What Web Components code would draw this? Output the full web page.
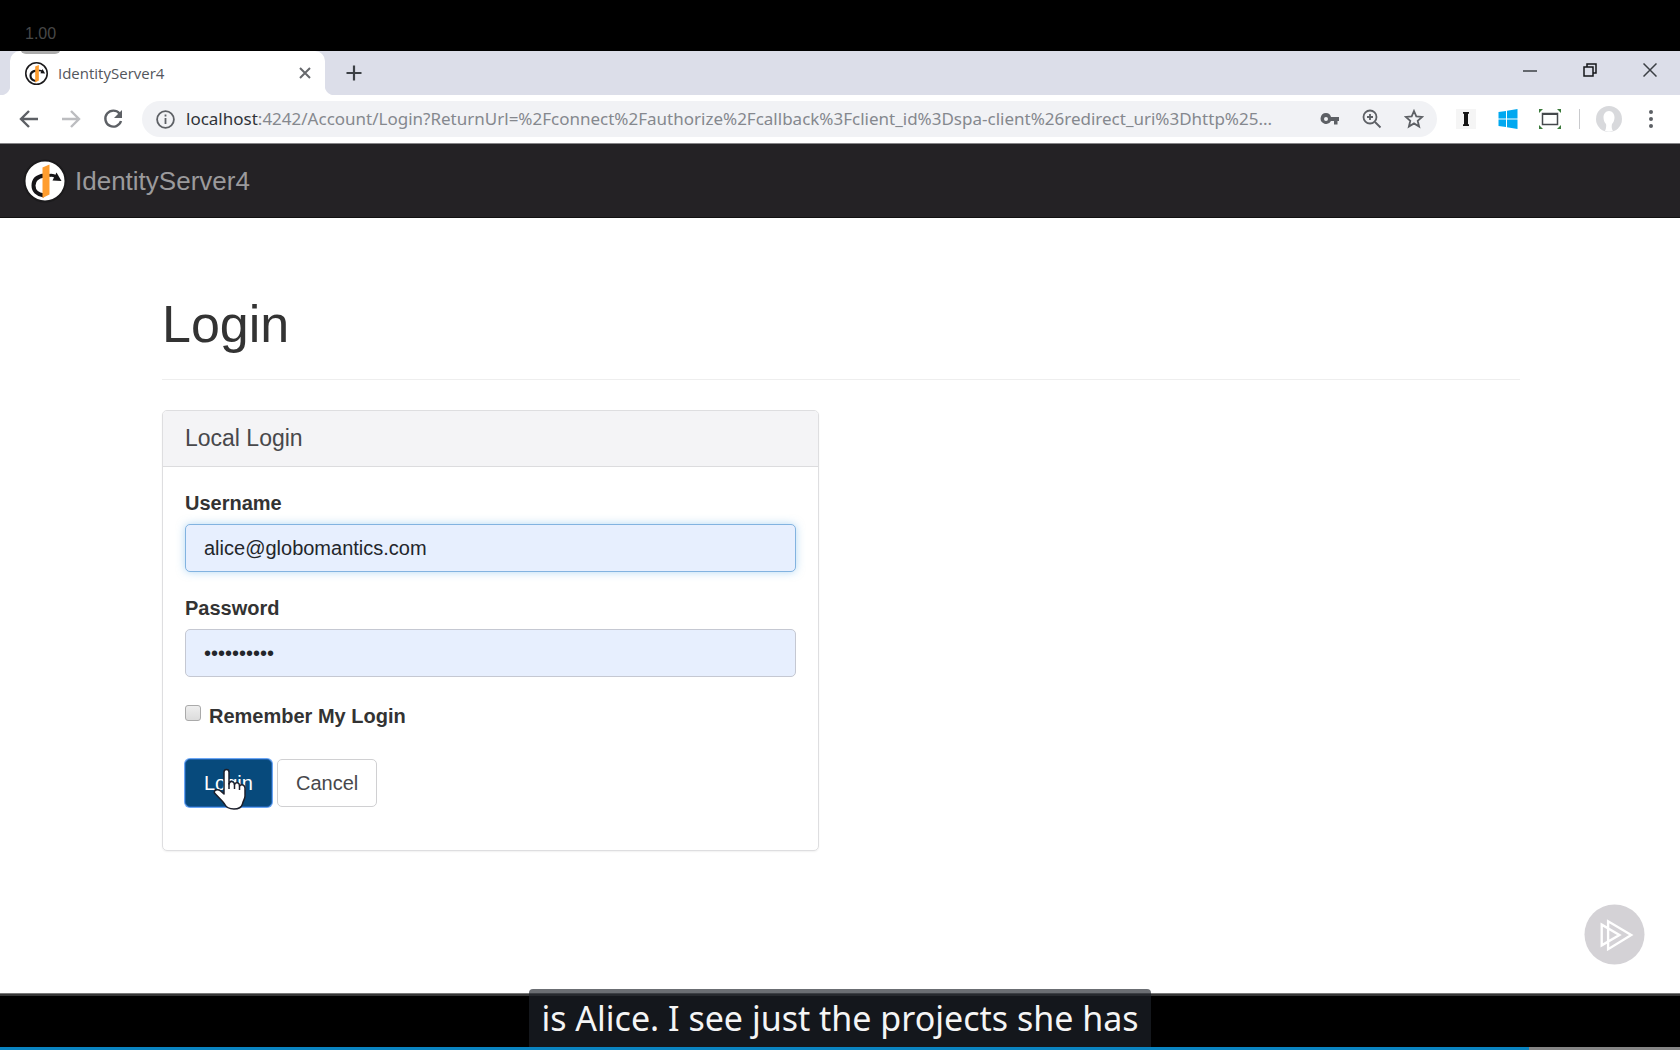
<!DOCTYPE html>
<html lang="en">
<head>
<meta charset="utf-8">
<title>IdentityServer4</title>
<style>
html, body { margin: 0; height: 100%; background: #000; }
body { font-family: "Liberation Sans", Arial, sans-serif; color: #333; }
</style>
</head>
<body>
<video-player rate="1.00">
  <browser-tabs>IdentityServer4</browser-tabs>
  <browser-toolbar></browser-toolbar>
  <site-nav>IdentityServer4</site-nav>
  <login-page></login-page>
  <span slot="caption">is Alice. I see just the projects she has</span>
</video-player>
<script>
function define(name, html) {
  const template = document.createElement('template');
  template.innerHTML = html;
  customElements.define(name, class extends HTMLElement {
    constructor() {
      super();
      this.attachShadow({ mode: 'open' }).append(template.content.cloneNode(true));
    }
    connectedCallback() {
      this.shadowRoot.querySelectorAll('[data-from]').forEach(el => {
        el.textContent = this.getAttribute(el.dataset.from) || '';
      });
    }
  });
}

define('video-player', `
<style>
:host { display: flex; flex-direction: column; min-height: 100vh; background: #000; position: relative; }
.top { height: 51px; flex: none; }
.rate { position: absolute; top: 12px; left: 20px; height: 42px; box-sizing: border-box; padding: 12px 5px; font-size: 16px; line-height: 20px; color: #484848; background: rgba(0,0,0,.33); border-radius: 6px; }
.screen { flex: 1; display: flex; flex-direction: column; background: #fff; border-bottom: 2px solid #363636; box-shadow: inset 0 -1px #777; position: relative; }
.bottom { height: 51px; flex: none; }
.progress { height: 3px; flex: none; display: flex; background: #858585; }
.played { width: 91%; background: #0a84c1; }
.overlay { position: absolute; left: 0; right: 0; bottom: 3px; display: flex; justify-content: center; }
.caption { background: rgba(30,35,42,.66); color: #f5f5f5; font: 34px/40px "Noto Sans", sans-serif; padding: 9px 12px; border-radius: 4px 4px 0 0; }
.mark { position: absolute; right: 35px; bottom: 29px; width: 61px; height: 61px; }
</style>
<div class="top"></div>
<div class="screen"><slot></slot>
<svg class="mark" viewBox="0 0 62 62" fill="none" stroke="#fff" stroke-width="2.4"><circle cx="31" cy="31" r="30.5" fill="#d4d2d6" stroke="none"/><path d="M24.500 17.500V46L48 31.500Z M18 21V42L36 31.500Z"/></svg>
</div>
<div class="rate" data-from="rate"></div>
<div class="bottom"></div>
<div class="progress"><div class="played"></div></div>
<div class="overlay"><div class="caption"><slot name="caption"></slot></div></div>
`);

define('identity-logo', `
<style>:host { display: block; flex: none; } svg { display: block; width: 100%; height: 100%; } .ring { stroke-width: var(--ring, 2); }</style>
<svg viewBox="0 0 44 44"><circle class="ring" cx="22" cy="22" r="20.500" fill="#fff" stroke="#1b1a1c"/><path d="M21 16.500C14 17.500 10.500 21 10.500 26.500C10.500 31.500 14 35.500 21 36.500" fill="none" stroke="#161518" stroke-width="4"/><path d="M26 16.500Q30 15.500 33 18" fill="none" stroke="#161518" stroke-width="3"/><path d="M33.500 13.500L38.500 22L29.500 21.500Z" fill="#161518"/><path d="M19.500 8.500L26.500 5.500V35.500L19.500 39Z" fill="#ff9d2e"/></svg>
`);

define('browser-tabs', `
<style>
:host { display: flex; height: 44px; background: #dcdee9; justify-content: space-between; font: 15px/24px "Open Sans", "Noto Sans", sans-serif; color: #53565c; }
.tab { display: flex; align-items: center; width: 315px; margin-left: 10px; box-sizing: border-box; padding: 0 13px 0 15px; background: #fff; border-radius: 10px 10px 0 0; position: relative; }
.tab::before, .tab::after { content: ""; position: absolute; bottom: 0; width: 10px; height: 10px; }
.tab::before { right: 100%; background: radial-gradient(circle at 0 0, #dcdee9 10px, #fff 11px); }
.tab::after { left: 100%; background: radial-gradient(circle at 100% 0, #dcdee9 10px, #fff 11px); }
identity-logo { width: 23px; height: 23px; margin-right: 10px; --ring: 3; }
.title { flex: 1; }
.left, .windows { display: flex; }
button { border: 0; background: none; padding: 0; display: grid; place-items: center; }
svg { display: block; fill: none; stroke: #3c4045; }
.tab svg { stroke: #66686c; }
.new { width: 58px; }
.windows { align-items: flex-start; }
.windows button { width: 60px; height: 37px; }
.windows .restore { stroke: #15171a; }
</style>
<div class="left">
<div class="tab"><identity-logo></identity-logo><span class="title"><slot></slot></span><button aria-label="Close tab"><svg width="14" height="14" stroke-width="2"><path d="M2 2L12 12M12 2L2 12"/></svg></button></div>
<button class="new" aria-label="New tab"><svg width="16" height="16" stroke-width="2.200"><path d="M8 .5V15.500M.5 8H15.500"/></svg></button>
</div>
<div class="windows">
<button aria-label="Minimize"><svg width="14" height="14" stroke-width="1.500"><path d="M0 8H14"/></svg></button>
<button aria-label="Restore"><svg class="restore" width="14" height="14" stroke-width="1.500"><path d="M1 4H10V13H1ZM4 4V1H13V10H10"/></svg></button>
<button aria-label="Close"><svg width="14" height="14" stroke-width="1.500"><path d="M.5 .5L13.500 13.500M13.500 .5L.5 13.500"/></svg></button>
</div>
`);

define('browser-toolbar', `
<style>
:host { display: flex; align-items: center; height: 48px; padding: 0 8px; border-bottom: 1px solid #858487; background: #fff; }
button { border: 0; background: none; padding: 0; display: grid; place-items: center; width: 42px; height: 36px; flex: none; }
svg { display: block; fill: none; stroke: #5d6065; stroke-width: 2.400; }
.bar { flex: 1; min-width: 0; display: flex; align-items: center; height: 36px; margin: 0 8px; padding-right: 2px; background: #f1f2f5; border-radius: 18px; font: 17px/24px "Noto Sans", sans-serif; }
.bar > svg { margin: 0 11px 0 14px; flex: none; }
.host { color: #303338; }
input { flex: 1; min-width: 0; border: 0; padding: 0; background: none; font: inherit; color: #85888e; outline: 0; }
.sep { width: 1px; height: 20px; background: #c9cacd; margin: 0 8px; }
</style>
<button aria-label="Back"><svg width="20" height="20"><path d="M19 10H2M10 2L2 10L10 18"/></svg></button>
<button aria-label="Forward"><svg width="20" height="20" style="stroke:#bcbdc0"><path d="M1 10H18M10 2L18 10L10 18"/></svg></button>
<button aria-label="Reload"><svg width="20" height="20"><path d="M16.500 4.500A8 8 0 1 0 18 12"/><path d="M19 1V9H11Z" fill="#5d6065" stroke="none"/></svg></button>
<div class="bar">
<svg width="19" height="19" style="stroke-width:1.800"><circle cx="9.500" cy="9.500" r="8.400"/><path d="M9.500 8V14M9.500 4.500V6.500"/></svg>
<label class="host" for="url">localhost</label><input id="url" aria-label="Address" value=":4242/Account/Login?ReturnUrl=%2Fconnect%2Fauthorize%2Fcallback%3Fclient_id%3Dspa-client%26redirect_uri%3Dhttp%25...">
<button aria-label="Saved password"><svg width="20" height="14"><path fill="#5d6065" stroke="none" fill-rule="evenodd" d="M6 1A5.500 5.500 0 0 1 11 5H19V9H17.500V12.500H14V9H11A5.500 5.500 0 1 1 6 1ZM6 5A2 2 0 1 0 6 9A2 2 0 0 0 6 5Z"/></svg></button>
<button aria-label="Zoom"><svg width="20" height="20" style="stroke-width:1.800"><circle cx="8" cy="8" r="6.500"/><path d="M13 13L18.500 18.500M8 5V11M5 8H11"/></svg></button>
<button aria-label="Bookmark"><svg width="20" height="20" viewBox="0 0 20 20" style="stroke-width:1.800"><path d="M10 2L12.300 7.400L18.200 7.900L13.700 11.800L15.100 17.500L10 14.400L4.900 17.500L6.300 11.800L1.800 7.900L7.700 7.400Z"/></svg></button>
</div>
<button aria-label="Instapaper"><svg width="20" height="20" style="stroke:none"><rect width="20" height="20" fill="#f5f5f5"/><path fill="#151515" d="M7 3H13V4.500L12 5V15L13 15.500V17H7V15.500L8 15V5L7 4.500Z"/></svg></button>
<button aria-label="Windows"><svg width="20" height="20" style="stroke:none"><path fill="#00a8f0" d="M.5 3L8 2V9.500H.5ZM9 1.800L19.500 0V9.500H9ZM.5 10.500H8V18L.5 17ZM9 10.500H19.500V20L9 18.200Z"/></svg></button>
<button aria-label="Resize"><svg width="22" height="20"><path stroke="#45484c" style="stroke-width:1.500" d="M3.500 4.500H18.500V15.500H3.500Z"/><path stroke="#45484c" style="stroke-width:2" d="M3.500 5H18.500"/><path fill="#3b7a3b" stroke="none" d="M0 0H4L0 4ZM22 0V4L18 0ZM0 20V16L4 20ZM22 20H18L22 16Z"/></svg></button>
<span class="sep"></span>
<button aria-label="Profile"><svg width="26" height="26" style="stroke:none"><circle cx="13" cy="13" r="13" fill="#d8d9dc"/><path fill="#fff" d="M13 5C9.500 5 7.500 8 7.500 11.500C7.500 14 8.500 16.500 10 18C10.500 20 10 23 9 25Q13 26.500 17 25C15.500 23 15.500 20 16 18C17.500 16.500 18.500 14 18.500 11.500C18.500 8 16.500 5 13 5Z"/></svg></button>
<button aria-label="Menu"><svg width="6" height="20" style="stroke:none;fill:#5d6065"><circle cx="3" cy="3" r="2"/><circle cx="3" cy="10" r="2"/><circle cx="3" cy="17" r="2"/></svg></button>
`);

define('site-nav', `
<style>
:host { display: block; background: #242225; border-bottom: 1px solid #111; }
a { display: flex; align-items: center; gap: 8px; height: 73px; padding: 0 23px; color: #9b9a9c; text-decoration: none; font-size: 26px; line-height: 28px; width: max-content; }
identity-logo { width: 44px; height: 44px; }
</style>
<a href="#"><identity-logo></identity-logo><span><slot></slot></span></a>
`);

define('form-field', `
<style>:host { display: block; margin-bottom: 22px; } ::slotted(label) { display: block; font-weight: 700; line-height: 28px; margin-bottom: 7px; }</style>
<slot name="label"></slot><slot></slot>
`);

define('login-panel', `
<style>
:host { display: block; box-sizing: border-box; border: 1px solid #dedee0; border-radius: 5px; box-shadow: 0 1px 2px rgba(0,0,0,.06); font-size: 20px; line-height: 28px; }
h2 { margin: 0; padding: 13px 22px 14px; font-size: 23px; line-height: 28px; font-weight: 400; color: #48484b; background: #f4f4f6; border-bottom: 1px solid #dcdcde; border-radius: 4px 4px 0 0; }
form { padding: 22px 22px 43px; }
input { font: inherit; }
.text { display: block; width: 100%; height: 48px; box-sizing: border-box; border: 1px solid #c5c8d2; border-radius: 5px; background: #e7effe; padding: 0 18px; color: #23262b; outline: 0; }
.text.active { border-color: #82b3e0; box-shadow: 0 0 8px rgba(102,175,233,.5); }
.remember { display: flex; align-items: center; gap: 8px; margin: 25px 0 29px; font-weight: 700; }
.remember input { appearance: none; width: 16px; height: 16px; margin: 0 0 7px; border: 1px solid #aaa; border-radius: 3px; background: linear-gradient(#eee, #dcdcdc); }
.actions { display: flex; gap: 5px; }
.holder { position: relative; display: flex; }
button { font: inherit; height: 48px; padding: 0 18px; border: 1px solid #d0d0d2; border-radius: 5px; background: #fff; color: #48484b; }
.primary { background: #074a7c; border-color: #1d5fa8; color: #fff; box-shadow: 0 0 0 1px #6aa6f5; }
.pointer { position: absolute; left: 28px; top: 9px; width: 34px; height: 42px; pointer-events: none; }
</style>
<h2>Local Login</h2>
<form onsubmit="return false">
<form-field><label slot="label" for="user">Username</label><input class="text active" id="user" value="alice@globomantics.com"></form-field>
<form-field><label slot="label" for="pass">Password</label><input class="text" id="pass" type="password" value="globomanti"></form-field>
<div class="remember"><input type="checkbox" id="remember"><label for="remember">Remember My Login</label></div>
<div class="actions"><span class="holder"><button class="primary">Login</button>
<svg class="pointer" viewBox="0 0 34 42"><path fill="#fff" stroke="#1c1f2b" stroke-width="1.500" stroke-linejoin="round" d="M11 4C11 .5 16 .5 16 4V16C17 12.500 21 13 21.500 16.500C23 13.500 26.500 14.500 26.500 18C28.500 15.500 32 17 32 20V28C32 31 30 33 29.500 36Q28 41 21 41Q14 41 11.500 36C9 32 5 29 1.500 25C.5 22 4.500 21 7 22.500L11 26Z"/><path d="M16 15V21M21.500 16V21M26.500 18V22" stroke="#1c1f2b" stroke-width="1.500"/></svg></span>
<button type="button">Cancel</button></div>
</form>
`);

define('login-page', `
<style>
:host { display: block; padding: 76px 160px 100px 162px; }
h1 { margin: 0; font-size: 52px; line-height: 60px; font-weight: 400; padding-bottom: 25px; border-bottom: 1px solid #eee; margin-bottom: 30px; }
.columns { display: grid; grid-template-columns: 1fr 1fr; gap: 44px; }
</style>
<h1>Login</h1>
<div class="columns"><login-panel></login-panel></div>
`);
</script>
</body>
</html>
